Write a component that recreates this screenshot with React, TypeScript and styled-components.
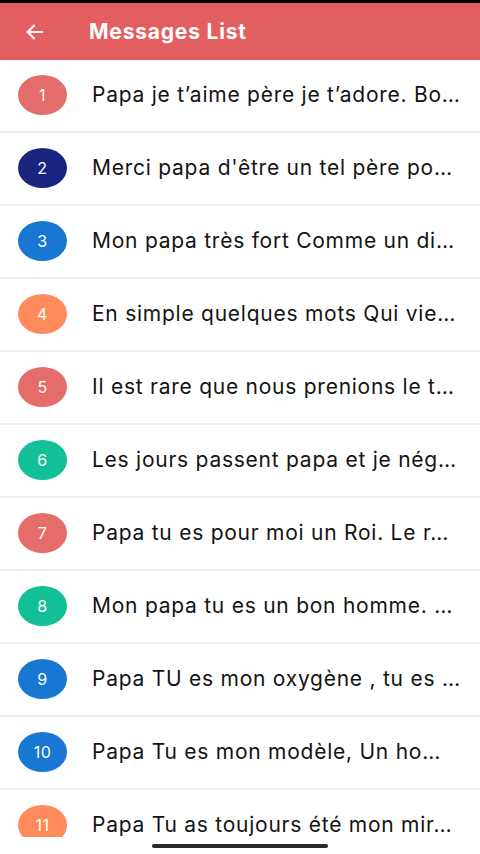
import React from "react";
import styled, { createGlobalStyle } from "styled-components";

const Global = createGlobalStyle`
  html, body { margin: 0; padding: 0; background: #ffffff; }
  body { font-family: Inter, "Noto Sans", "Liberation Sans", sans-serif; }
  * { box-sizing: border-box; }
`;

const Screen = styled.div`
  width: 480px;
  height: 854px;
  display: flex;
  flex-direction: column;
  background: #ffffff;
  overflow: hidden;
`;

const StatusEdge = styled.div`
  height: 3px;
  background: #000000;
  flex: none;
`;

const Toolbar = styled.header`
  height: 57px;
  flex: none;
  display: flex;
  align-items: center;
  background: #e35e5f;
  padding-left: 23px;
`;

const BackButton = styled.button`
  width: 24px;
  height: 24px;
  padding: 0;
  border: none;
  background: transparent;
  display: flex;
  align-items: center;
  justify-content: center;
  color: #ffffff;
`;

const Title = styled.h1`
  margin: 0 0 0 42px;
  font-family: Inter, "Noto Sans", sans-serif;
  font-weight: 700;
  font-size: 21px;
  letter-spacing: 0.8px;
  color: #ffffff;
`;

const List = styled.ul`
  list-style: none;
  margin: 0;
  padding: 0;
  height: 777px;
  flex: none;
  overflow: hidden;
`;

const Row = styled.li`
  height: 73px;
  display: flex;
  align-items: center;
  padding: 0 18px 2px 18px;
  border-bottom: 2px solid #eeeeee;
`;

const Badge = styled.div<{ $color: string }>`
  width: 49px;
  height: 40px;
  flex: none;
  border-radius: 50%;
  background: ${(p) => p.$color};
  color: #ffffff;
  display: flex;
  align-items: center;
  justify-content: center;
  font-family: Inter, "Noto Sans", sans-serif;
  font-size: 16px;
  font-weight: 400;
  letter-spacing: 0.5px;
`;

const Message = styled.span`
  margin-left: 25px;
  flex: 1;
  min-width: 0;
  font-family: Inter, "Noto Sans", sans-serif;
  font-size: 21px;
  letter-spacing: 0.75px;
  color: #141414;
  white-space: nowrap;
`;

const Footer = styled.div`
  flex: 1;
  display: flex;
  justify-content: center;
  padding-top: 7px;
  background: #ffffff;
`;

const HomeIndicator = styled.div`
  width: 176px;
  height: 4px;
  border-radius: 2px;
  background: #2a2a2a;
`;

const RED = "#e46c69";
const NAVY = "#1a237e";
const BLUE = "#1976d2";
const ORANGE = "#ff8a5b";
const TEAL = "#13bf97";

const messages: { text: string; color: string }[] = [
  { text: "Papa je t\u2019aime père je t\u2019adore. Bo…", color: RED },
  { text: "Merci papa d'être un tel père po…", color: NAVY },
  { text: "Mon papa très fort Comme un di…", color: BLUE },
  { text: "En simple quelques mots Qui vie…", color: ORANGE },
  { text: "Il est rare que nous prenions le t…", color: RED },
  { text: "Les jours passent papa et je nég…", color: TEAL },
  { text: "Papa tu es pour moi un Roi. Le r…", color: RED },
  { text: "Mon papa tu es un bon homme. …", color: TEAL },
  { text: "Papa TU es mon oxygène , tu es …", color: BLUE },
  { text: "Papa Tu es mon modèle, Un ho…", color: BLUE },
  { text: "Papa Tu as toujours été mon mir…", color: ORANGE },
];

export default function App() {
  return (
    <Screen>
      <Global />
      <StatusEdge />
      <Toolbar>
        <BackButton aria-label="Back">
          <svg width="22" height="22" viewBox="0 0 24 24" fill="none" stroke="#ffffff" strokeWidth="2.4" strokeLinecap="round" strokeLinejoin="round">
            <path d="M20 12H4" />
            <path d="M11 5l-7 7 7 7" />
          </svg>
        </BackButton>
        <Title>Messages List</Title>
      </Toolbar>
      <List>
        {messages.map((m, i) => (
          <Row key={i}>
            <Badge $color={m.color}>{i + 1}</Badge>
            <Message>{m.text}</Message>
          </Row>
        ))}
      </List>
      <Footer>
        <HomeIndicator />
      </Footer>
    </Screen>
  );
}
